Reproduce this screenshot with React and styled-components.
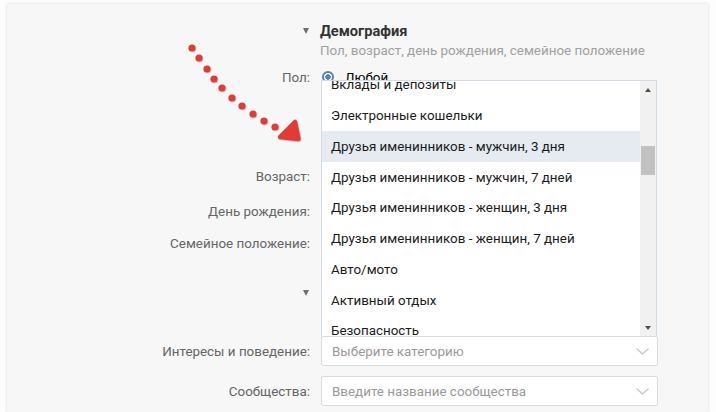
import React from "react";
import styled, { createGlobalStyle } from "styled-components";

const Global = createGlobalStyle`
  html, body { margin: 0; padding: 0; background: #fdfdfd; height: 412px; }
  body { font-family: Roboto, "Open Sans", "Liberation Sans", sans-serif; font-size: 13.4px; overflow: hidden; }
`;

const Card = styled.div`
  position: relative;
  margin: 4px 0 0 7px;
  width: 701px;
  height: 408px;
  padding-top: 17px;
  box-sizing: border-box;
  background: #f7f7f7;
  box-shadow: 0 0 3px rgba(0, 0, 0, 0.16);
`;

const Row = styled.div`
  display: grid;
  grid-template-columns: 303px 337px;
  column-gap: 11px;
  align-items: center;
  height: ${(p) => p.$h}px;
  margin-top: ${(p) => p.$mt || 0}px;
`;

const Label = styled.div`
  text-align: right;
  color: #656565;
  white-space: nowrap;
`;

const Caret = styled.div`
  justify-self: end;
  margin-right: 1px;
  width: 0;
  height: 0;
  border-left: 3.5px solid transparent;
  border-right: 3.5px solid transparent;
  border-top: 6px solid #6f6f6f;
`;

const Title = styled.div`
  font-size: 14.6px;
  font-weight: 700;
  color: #333;
  margin-left: -1px;
`;

const Hint = styled.div`
  color: #a0a0a0;
  margin-left: -1px;
`;

const Radio = styled.label`
  display: flex;
  align-items: center;
  gap: 11px;
  color: #000;
  &::before {
    content: "";
    width: 8px;
    height: 8px;
    border-radius: 50%;
    border: 2px solid #5181b8;
    background: radial-gradient(circle, #5181b8 0 2.5px, #fff 3px);
    margin-left: 1px;
  }
`;

const SelectWrap = styled.div`
  position: relative;
`;

const Select = styled.div`
  height: 30px;
  box-sizing: border-box;
  border: 1px solid #d7dce1;
  border-radius: 2px;
  background: #fff;
  display: flex;
  align-items: center;
  justify-content: space-between;
  padding: 0 7px 0 10px;
  color: #999;
`;

const Menu = styled.div`
  position: absolute;
  left: 0;
  right: 1px;
  bottom: 100%;
  height: 256px;
  box-sizing: border-box;
  border: 1px solid #d3dbe4;
  border-bottom: none;
  background: #fff;
  display: flex;
  z-index: 2;
`;

const List = styled.div`
  flex: 1;
  overflow: hidden;
`;

const ListInner = styled.div`
  margin-top: -11.5px;
`;

const Item = styled.div`
  height: 30.75px;
  display: flex;
  align-items: center;
  padding-left: 9px;
  color: #1a1a1a;
  white-space: nowrap;
  background: ${(p) => (p.$active ? "#e5ebf1" : "#fff")};
`;

const Scrollbar = styled.div`
  width: 16px;
  background: #f1f1f1;
  display: flex;
  flex-direction: column;
  align-items: center;
`;

const ScrollBtn = styled.div`
  height: 17px;
  width: 16px;
  display: flex;
  align-items: center;
  justify-content: center;
  margin-top: ${(p) => (p.$down ? "auto" : "0")};
  &::after {
    content: "";
    border-left: 3.5px solid transparent;
    border-right: 3.5px solid transparent;
    ${(p) => (p.$down ? "border-top" : "border-bottom")}: 4px solid #505050;
  }
`;

const Thumb = styled.div`
  margin-top: 48px;
  width: 14px;
  height: 29px;
  background: #c1c1c1;
`;

const Annotation = styled.svg`
  position: absolute;
  left: 0;
  top: 0;
  pointer-events: none;
  z-index: 5;
`;

const Chevron = () => (
  <svg width="15" height="9" viewBox="0 0 15 9">
    <polyline points="1.5,1.5 7.5,7 13.5,1.5" fill="none" stroke="#c4c8cc" strokeWidth="1.3" />
  </svg>
);

const items = [
  "Вклады и депозиты",
  "Электронные кошельки",
  "Друзья именинников - мужчин, 3 дня",
  "Друзья именинников - мужчин, 7 дней",
  "Друзья именинников - женщин, 3 дня",
  "Друзья именинников - женщин, 7 дней",
  "Авто/мото",
  "Активный отдых",
  "Безопасность",
  "Бизнес",
];

const dots = [
  [192, 48], [199, 58], [207, 69], [214, 79], [222, 88],
  [232, 98], [242, 106], [253, 114], [264, 121], [275, 127],
];

export default function App() {
  return (
    <>
      <Global />
      <Card>
        <Row $h={20}>
          <Caret />
          <Title>Демография</Title>
        </Row>
        <Row $h={18}>
          <span />
          <Hint>Пол, возраст, день рождения, семейное положение</Hint>
        </Row>
        <Row $h={24} $mt={6}>
          <Label>Пол:</Label>
          <Radio>Любой</Radio>
        </Row>
        <Row $h={30} $mt={72}>
          <Label>Возраст:</Label>
          <span />
        </Row>
        <Row $h={30} $mt={5}>
          <Label>День рождения:</Label>
          <span />
        </Row>
        <Row $h={30} $mt={2}>
          <Label>Семейное положение:</Label>
          <span />
        </Row>
        <Row $h={20} $mt={25}>
          <Caret />
          <span />
        </Row>
        <Row $h={30} $mt={33}>
          <Label>Интересы и поведение:</Label>
          <SelectWrap>
            <Select>
              Выберите категорию
              <Chevron />
            </Select>
            <Menu>
              <List>
                <ListInner>
                  {items.map((t, i) => (
                    <Item key={t} $active={i === 2}>
                      {t}
                    </Item>
                  ))}
                </ListInner>
              </List>
              <Scrollbar>
                <ScrollBtn />
                <Thumb />
                <ScrollBtn $down />
              </Scrollbar>
            </Menu>
          </SelectWrap>
        </Row>
        <Row $h={30} $mt={10}>
          <Label>Сообщества:</Label>
          <Select>
            Введите название сообщества
            <Chevron />
          </Select>
        </Row>
      </Card>
      <Annotation width="716" height="412" viewBox="0 0 716 412">
        <defs>
          <filter id="sh" x="-50%" y="-50%" width="200%" height="200%">
            <feDropShadow dx="0.6" dy="0.8" stdDeviation="0.6" floodColor="#000" floodOpacity="0.25" />
          </filter>
        </defs>
        <g fill="#e23b36" filter="url(#sh)">
          {dots.map(([x, y]) => (
            <circle key={x} cx={x} cy={y} r="3.6" />
          ))}
          <polygon
            points="295,122 298.5,139 280,137"
            stroke="#e23b36"
            strokeWidth="4.5"
            strokeLinejoin="round"
          />
        </g>
      </Annotation>
    </>
  );
}
